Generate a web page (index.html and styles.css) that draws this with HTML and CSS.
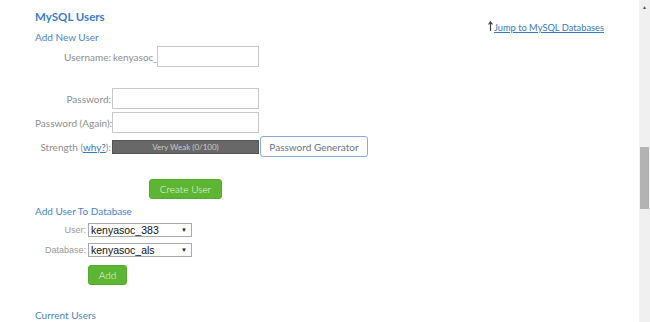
FILE: index.html
```html
<!DOCTYPE html>
<html lang="en">
<head>
    <meta charset="UTF-8">
    <meta name="viewport" content="width=device-width, initial-scale=1.0">
    <title>MySQL Users</title>
    <link rel="stylesheet" href="styles.css">
</head>
<body>
    <div class="page">
        <div class="content">
            <div class="top">
                <div>
                    <h2 class="title">MySQL Users</h2>
                    <h3 class="subtitle">Add New User</h3>
                </div>
                <a class="jump" href="#">
                    <svg class="arrow" width="5" height="10" viewBox="0 0 5 10"><path d="M2.5 10V1.5M0.5 3.5L2.5 0.8L4.5 3.5" fill="none" stroke="#444" stroke-width="1.2"/></svg>
                    <span class="jump-text">Jump to MySQL Databases</span>
                </a>
            </div>

            <div class="form-grid">
                <label class="lbl">Username:</label>
                <div class="field"><span class="prefix">kenyasoc_</span><input type="text" class="input short"></div>

                <div class="spacer"></div>

                <label class="lbl">Password:</label>
                <div class="field"><input type="password" class="input"></div>

                <label class="lbl">Password (Again):</label>
                <div class="field"><input type="password" class="input"></div>

                <label class="lbl">Strength (<a href="#" class="why">why?</a>):</label>
                <div class="field">
                    <div class="strength">Very Weak (0/100)</div>
                    <button class="gen-btn">Password Generator</button>
                </div>
            </div>

            <div class="create-row">
                <button class="green-btn create">Create User</button>
            </div>

            <h3 class="subtitle db-title">Add User To Database</h3>

            <div class="db-grid">
                <label class="lbl small">User:</label>
                <div class="select-wrap">
                    <select class="sel"><option>kenyasoc_383</option></select>
                    <span class="caret">&#9660;</span>
                </div>

                <label class="lbl small">Database:</label>
                <div class="select-wrap">
                    <select class="sel"><option>kenyasoc_als</option></select>
                    <span class="caret">&#9660;</span>
                </div>
            </div>
            <div class="add-row">
                <button class="green-btn add">Add</button>
            </div>

            <h3 class="subtitle current">Current Users</h3>
        </div>

        <div class="scrollbar">
            <div class="scroll-up">&#9650;</div>
            <div class="scroll-thumb"></div>
        </div>
    </div>
</body>
</html>
```

FILE: styles.css
```css
body {
    margin: 0;
    font-family: Lato, "Open Sans", sans-serif;
    color: #777;
    background: #fff;
}
.page {
    display: flex;
    height: 322px;
    overflow: hidden;
}
.content {
    flex: 1;
    padding-left: 35px;
}
.top {
    display: flex;
    justify-content: space-between;
    padding-right: 35px;
}
.title {
    margin: 0;
    padding-top: 9px;
    font-size: 11.5px;
    line-height: 15px;
    font-weight: 700;
    color: #3b7ccd;
}
.subtitle {
    margin: 0;
    font-size: 10px;
    line-height: 14px;
    font-weight: 400;
    color: #4a84c6;
}
.top .subtitle {
    margin-top: 6px;
}
.jump {
    display: flex;
    align-items: flex-end;
    padding-top: 20px;
    height: 14px;
    color: #3a77c0;
    font-size: 9.3px;
    text-decoration: none;
}
.jump .arrow {
    margin: 0 1px 3px 0;
}
.jump-text {
    text-decoration: underline;
    line-height: 12px;
}
.form-grid {
    display: grid;
    grid-template-columns: 77px auto;
    grid-template-rows: 21px 15px 21px 21px 21px;
    row-gap: 3px;
    margin-top: 2px;
    align-items: center;
}
.form-grid .spacer {
    grid-column: 1 / 3;
}
.lbl {
    text-align: right;
    font-size: 10px;
    font-weight: 400;
    color: #8e8e8e;
    white-space: nowrap;
    padding-right: 1px;
}
.why {
    color: #3a77c0;
}
.field {
    display: flex;
    align-items: center;
}
.prefix {
    font-size: 10px;
    color: #8e8e8e;
    width: 44px;
    margin-left: 1px;
}
.input {
    box-sizing: border-box;
    width: 147px;
    height: 21px;
    border: 1px solid #c8c8c8;
    padding: 2px 4px;
    margin: 0;
}
.input.short {
    width: 102px;
}
.strength {
    box-sizing: border-box;
    width: 147px;
    height: 14px;
    background: #686868;
    border: 1px solid #555;
    color: #c9c9c9;
    font-size: 8px;
    line-height: 12px;
    text-align: center;
}
.gen-btn {
    margin-left: 1px;
    box-sizing: border-box;
    width: 108px;
    height: 21px;
    background: #fff;
    border: 1px solid #88aad6;
    border-radius: 3px;
    color: #6a7282;
    font-family: Lato, "Open Sans", sans-serif;
    font-size: 10px;
    padding: 0;
}
.create-row {
    margin-top: 22px;
    padding-left: 114px;
}
.green-btn {
    background: #5cb533;
    border: 1px solid #54ab2b;
    border-radius: 3px;
    color: #f2f9ee;
    font-family: Lato, "Open Sans", sans-serif;
    font-size: 10px;
    font-weight: 300;
    padding: 0;
}
.create {
    width: 73px;
    height: 20px;
    display: block;
}
.db-title {
    margin-top: 5px;
}
.db-grid {
    display: grid;
    grid-template-columns: 53px auto;
    grid-auto-rows: 14px;
    row-gap: 6px;
    margin-top: 5px;
    align-items: center;
}
.db-grid .lbl.small {
    font-family: "Liberation Sans", Arial, sans-serif;
    font-size: 9px;
    color: #999;
    padding-right: 2px;
}
.select-wrap {
    position: relative;
    width: 104px;
}
.sel {
    -webkit-appearance: none;
    appearance: none;
    box-sizing: border-box;
    width: 104px;
    height: 14px;
    margin: 0;
    padding: 0 0 0 2px;
    border: 1px solid #a9a9a9;
    background: #fff;
    color: #111;
    font-family: "Liberation Sans", Arial, sans-serif;
    font-size: 10.5px;
    line-height: 12px;
    display: block;
}
.caret {
    position: absolute;
    right: 5px;
    top: 3px;
    font-size: 6px;
    color: #222;
}
.add-row {
    padding-left: 53px;
    margin-top: 8px;
}
.add {
    width: 39px;
    height: 20px;
    display: block;
}
.current {
    margin-top: 23px;
}
.scrollbar {
    width: 11px;
    background: #f0f0f0;
    display: flex;
    flex-direction: column;
    align-items: center;
}
.scroll-up {
    font-size: 5px;
    color: #555;
    margin-top: 4px;
    height: 8px;
}
.scroll-thumb {
    width: 9px;
    height: 62px;
    margin-top: 135px;
    background: #b3b3b3;
}
```
